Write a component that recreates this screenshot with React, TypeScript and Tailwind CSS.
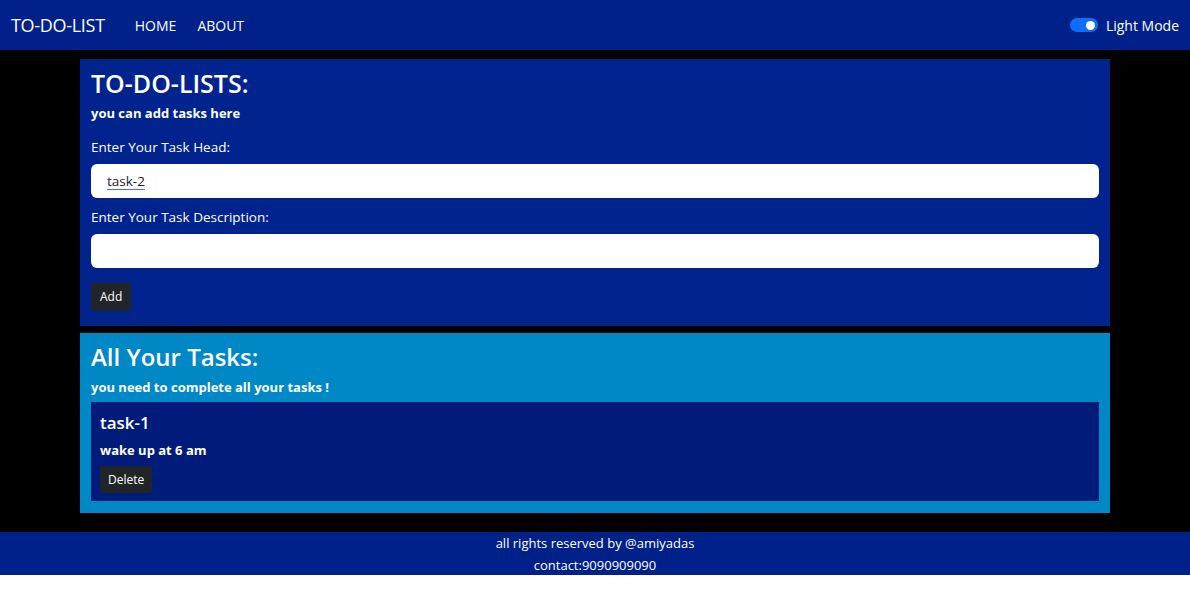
import { useState } from 'react'

const font = { fontFamily: '"Open Sans", "Noto Sans", sans-serif' }

export default function App() {
  const [head, setHead] = useState('task-2')
  const [desc, setDesc] = useState('')

  return (
    <div style={font} className="w-[1190px] bg-white text-white">
      {/* Navbar */}
      <nav className="h-[50px] bg-[#00208a] flex items-center px-[11px]">
        <span className="text-[18px] tracking-[-0.3px] mr-[30px]">TO-DO-LIST</span>
        <a className="text-[14px] mr-[21px]">HOME</a>
        <a className="text-[14px]">ABOUT</a>
        <div className="ml-auto flex items-center gap-[8px]">
          <div className="w-[28px] h-[14px] rounded-full bg-[#0d6efd] flex items-center justify-end pr-[3px]">
            <div className="w-[9px] h-[9px] rounded-full bg-white" />
          </div>
          <span className="text-[14px]">Light Mode</span>
        </div>
      </nav>

      {/* Main */}
      <main className="bg-black pt-[9px] pb-[19px] px-[80px] flex flex-col gap-[7px]">
        <section className="bg-[#00238e] px-[11px] pt-[8px] pb-[15px]">
          <h1 className="text-[25px] font-semibold leading-[32px]">TO-DO-LISTS:</h1>
          <p className="text-[13px] font-bold mt-[5px]">you can add tasks here</p>
          <label className="block text-[13.5px] mt-[13px]">Enter Your Task Head:</label>
          <input
            value={head}
            onChange={(e) => setHead(e.target.value)}
            className="block w-full h-[34px] mt-[7px] rounded-[6px] bg-white text-[#212529] text-[13.5px] px-[16px] outline-none underline decoration-[#4a6ee0] underline-offset-[3px]"
          />
          <label className="block text-[13.5px] mt-[9px]">Enter Your Task Description:</label>
          <input
            value={desc}
            onChange={(e) => setDesc(e.target.value)}
            className="block w-full h-[34px] mt-[7px] rounded-[6px] bg-white text-[#212529] text-[13.5px] px-[16px] outline-none"
          />
          <button className="mt-[15px] h-[28px] px-[9px] bg-[#212529] rounded-[3px] text-[12px]">Add</button>
        </section>

        <section className="bg-[#0088c6] px-[11px] pt-[8px] pb-[12px]">
          <h2 className="text-[24px] font-semibold leading-[32px]">All Your Tasks:</h2>
          <p className="text-[13px] font-bold mt-[5px]">you need to complete all your tasks !</p>
          <div className="mt-[4px] bg-[#001b7a] px-[9px] pt-[9px] pb-[8px]">
            <h3 className="text-[17px] font-semibold leading-[24px]">task-1</h3>
            <p className="text-[13px] font-bold mt-[6px]">wake up at 6 am</p>
            <button className="mt-[6px] h-[27px] px-[8px] bg-[#212529] rounded-[3px] text-[12px]">Delete</button>
          </div>
        </section>
      </main>

      {/* Footer */}
      <footer className="bg-[#00208a] h-[43px] flex flex-col items-center justify-center text-[13px] leading-[22px]">
        <span>all rights reserved by @amiyadas</span>
        <span>contact:9090909090</span>
      </footer>
      <div className="h-[15px] bg-white" />
    </div>
  )
}
